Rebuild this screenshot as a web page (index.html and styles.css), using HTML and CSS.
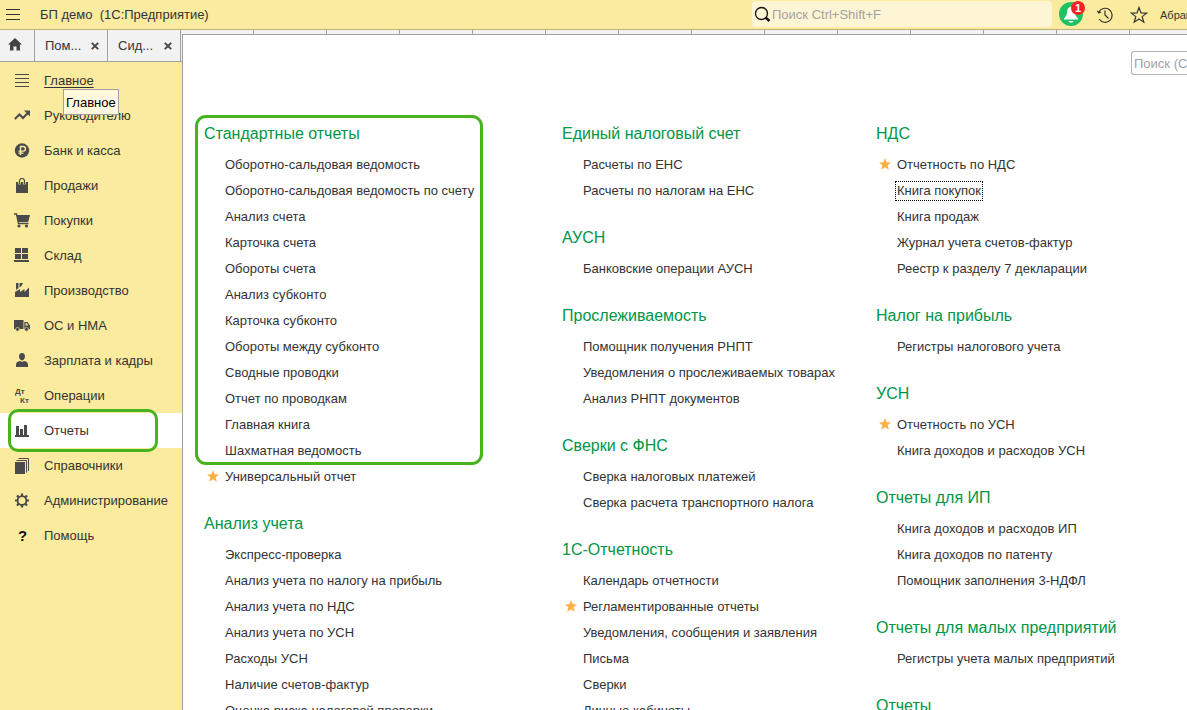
FILE: index.html
```html
<!DOCTYPE html>
<html lang="ru">
<head>
<meta charset="utf-8">
<title>БП демо (1С:Предприятие)</title>
<link rel="stylesheet" href="styles.css">
</head>
<body>
<header class="topbar">
  <button class="icon-btn menu-btn" aria-label="Меню"><svg width="14" height="12" viewBox="0 0 14 12"><path d="M0 .5h14M0 5.500h14M0 10.500h14" stroke="#333" fill="none"/></svg></button>
  <h1 class="app-title">БП демо&nbsp; (1С:Предприятие)</h1>
  <label class="global-search">
    <svg width="17" height="17" viewBox="0 0 17 17" fill="none" stroke="#111"><circle cx="7.500" cy="7.500" r="6" stroke-width="1.300"/><path d="M11.500 11.500L15.500 15" stroke-width="2.400"/></svg>
    <input type="text" placeholder="Поиск Ctrl+Shift+F" aria-label="Поиск">
  </label>
  <div class="top-actions">
    <button class="icon-btn bell-btn" aria-label="Уведомления"><svg width="24" height="24" viewBox="0 0 24 24"><circle cx="12" cy="12" r="12" fill="#20c063"/><path d="M12 4.500c-2.700.5-3.800 2.700-4 5.500-.2 3-1 4.500-3 6.500v1h14v-1c-2-2-2.800-3.500-3-6.500-.2-2.800-1.300-5-4-5.500z" fill="#fff"/><path d="M9.500 19h5c-.5 2-4.500 2-5 0z" fill="#fff"/></svg><span class="badge">1</span></button>
    <button class="icon-btn" aria-label="История"><svg width="18" height="18" viewBox="0 0 18 18" fill="none" stroke="#333" stroke-width="1.200"><path d="M2.700 6.500A7 7 0 1 1 3.200 13"/><path d="M.5 4.500l2 3.300 3.300-1.600z" fill="#333" stroke="none"/><path d="M9 4.500V9l3.500 3.500"/></svg></button>
    <button class="icon-btn" aria-label="Избранное"><svg width="18" height="18" viewBox="0 0 18 18"><path d="M9 1.500l2 5.400 5.700.2-4.500 3.500 1.600 5.600L9 13l-4.800 3.200 1.600-5.600L1.300 7.100 7 6.900z" fill="none" stroke="#333" stroke-width="1.200"/></svg></button>
    <span class="user">Абрамов</span>
  </div>
</header>
<div class="workspace">
  <div class="left">
    <div class="tabs">
      <button class="tab home" aria-label="Начальная страница"><svg width="14" height="13" viewBox="0 0 14 13"><path d="M7 0l7 6.500h-2V12.500H8.500V8.500h-3v4H2v-6H0z" fill="#444"/></svg></button>
      <div class="tab"><button class="tab-name">Пом...</button><button class="close" aria-label="Закрыть"><svg width="8" height="8" viewBox="0 0 8 8"><path d="M.8.8l6.400 6.400M7.200.8L.8 7.200" stroke="#444" stroke-width="1.900"/></svg></button></div>
      <div class="tab"><button class="tab-name">Сид...</button><button class="close" aria-label="Закрыть"><svg width="8" height="8" viewBox="0 0 8 8"><path d="M.8.8l6.400 6.400M7.200.8L.8 7.200" stroke="#444" stroke-width="1.900"/></svg></button></div>
    </div>
    <nav class="sections">
      <a class="nav hovered" href="#"><svg viewBox="0 0 16 16"><path d="M1 1.500h14M1 5.500h14M1 9.500h14M1 13.500h14" stroke="#4a4a4a"/></svg><span>Главное</span><span class="tooltip" role="tooltip">Главное</span></a>
      <a class="nav" href="#"><svg viewBox="0 0 16 16"><path d="M.8 11l4.700-4.500 3.500 3.500 4.500-4.800" fill="none" stroke="#4a4a4a" stroke-width="2"/><path d="M10 2.500h6v6z" fill="#4a4a4a"/></svg><span>Руководителю</span></a>
      <a class="nav" href="#"><svg viewBox="0 0 16 16"><circle cx="8" cy="7.500" r="7.200" fill="#4a4a4a"/><path d="M6.500 12V3.500h2.700a2.300 2.300 0 0 1 0 4.600H4.500M4.500 10.100h5" fill="none" stroke="#faeb9e" stroke-width="1.400"/></svg><span>Банк и касса</span></a>
      <a class="nav" href="#"><svg viewBox="0 0 16 16"><path d="M2 4h12v11H2z" fill="#4a4a4a"/><path d="M5.500 6.500V3a2.500 2.500 0 0 1 5 0v3.500" fill="none" stroke="#faeb9e" stroke-width="2.600"/><path d="M5.500 6.500V3a2.500 2.500 0 0 1 5 0v3.500" fill="none" stroke="#4a4a4a" stroke-width="1.200"/></svg><span>Продажи</span></a>
      <a class="nav" href="#"><svg viewBox="0 0 16 16"><path d="M0 1h2.500l2 9.500h10" fill="none" stroke="#4a4a4a" stroke-width="1.300"/><path d="M2.500 2H16l-1.800 7H4z" fill="#4a4a4a"/><circle cx="5" cy="13" r="1.600" fill="#4a4a4a"/><circle cx="12.500" cy="13" r="1.600" fill="#4a4a4a"/></svg><span>Покупки</span></a>
      <a class="nav" href="#"><svg viewBox="0 0 16 16"><path d="M1 0h6v5H1zM8 0h6v5H8zM1 6h6v5H1zM8 6h6v5H8zM0 12h15v2H0z" fill="#4a4a4a"/></svg><span>Склад</span></a>
      <a class="nav" href="#"><svg viewBox="0 0 16 16"><path d="M1 14V9l5-3v3l4.500-3v3L15 4.500V14zM2 0h2.500v5L2 7zM5.500 0H9L7.500 3l-2 1.500z" fill="#4a4a4a"/></svg><span>Производство</span></a>
      <a class="nav" href="#"><svg viewBox="0 0 16 16"><path d="M0 2h9.500v9H0zM10.300 4h3.200L16 7.500V11h-5.700z" fill="#4a4a4a"/><path d="M11.500 5.200h1.500l1.200 2.200h-2.700z" fill="#faeb9e"/><circle cx="3.500" cy="11.300" r="1.900" fill="#4a4a4a" stroke="#faeb9e" stroke-width=".6"/><circle cx="12.500" cy="11.300" r="1.900" fill="#4a4a4a" stroke="#faeb9e" stroke-width=".6"/></svg><span>ОС и НМА</span></a>
      <a class="nav" href="#"><svg viewBox="0 0 16 16"><path d="M8 0c2 0 3 1.300 3 3.300S9.800 7.500 8 7.500 5 5.300 5 3.300 6 0 8 0zM2 14v-2.500c0-2 1.300-3 4-3.500l2 1 2-1c2.700.5 4 1.500 4 3.500V14z" fill="#4a4a4a"/></svg><span>Зарплата и кадры</span></a>
      <a class="nav" href="#"><svg viewBox="0 0 16 16"><text class="glyph-small" x="1" y="6">Дт</text><text class="glyph-small" x="6" y="15">Кт</text></svg><span>Операции</span></a>
      <a class="nav current" href="#" aria-current="page"><svg viewBox="0 0 16 16"><path d="M2 3h3v10H2zM6 6h3v7H6zM10 2h3v11h-3zM1 12h14v2H1z" fill="#4a4a4a"/></svg><span>Отчеты</span></a>
      <a class="nav" href="#"><svg viewBox="0 0 16 16"><path d="M1 4h10v12H1z" fill="#4a4a4a"/><path d="M2.500 2.500h10V14.500M4.500 .5h10V13" fill="none" stroke="#4a4a4a"/></svg><span>Справочники</span></a>
      <a class="nav" href="#"><svg viewBox="0 0 16 16"><circle cx="8" cy="7.500" r="4.400" fill="none" stroke="#4a4a4a" stroke-width="1.800"/><path d="M8 .5V3M8 12v2.500M1 7.500h2.500M12.500 7.500H15M3 2.500l1.900 1.900M11.100 10.600L13 12.500M13 2.500l-1.900 1.900M4.900 10.600L3 12.500" stroke="#4a4a4a" stroke-width="2.200"/></svg><span>Администрирование</span></a>
      <a class="nav" href="#"><svg viewBox="0 0 16 16"><text class="glyph-help" x="4" y="13">?</text></svg><span>Помощь</span></a>
    </nav>
  </div>
  <div class="right">
    <div class="tab-edge"></div>
    <main class="content">
      <div class="toolbar"><input class="panel-search" type="text" placeholder="Поиск (Ctrl+F)" aria-label="Поиск по разделу"></div>
      <div class="columns">
        <div class="column">
          <section class="group marked">
            <h2>Стандартные отчеты</h2>
            <ul>
              <li><a href="#">Оборотно-сальдовая ведомость</a></li>
              <li><a href="#">Оборотно-сальдовая ведомость по счету</a></li>
              <li><a href="#">Анализ счета</a></li>
              <li><a href="#">Карточка счета</a></li>
              <li><a href="#">Обороты счета</a></li>
              <li><a href="#">Анализ субконто</a></li>
              <li><a href="#">Карточка субконто</a></li>
              <li><a href="#">Обороты между субконто</a></li>
              <li><a href="#">Сводные проводки</a></li>
              <li><a href="#">Отчет по проводкам</a></li>
              <li><a href="#">Главная книга</a></li>
              <li><a href="#">Шахматная ведомость</a></li>
              <li class="fav"><a href="#">Универсальный отчет</a></li>
            </ul>
          </section>
          <section class="group">
            <h2>Анализ учета</h2>
            <ul>
              <li><a href="#">Экспресс-проверка</a></li>
              <li><a href="#">Анализ учета по налогу на прибыль</a></li>
              <li><a href="#">Анализ учета по НДС</a></li>
              <li><a href="#">Анализ учета по УСН</a></li>
              <li><a href="#">Расходы УСН</a></li>
              <li><a href="#">Наличие счетов-фактур</a></li>
              <li><a href="#">Оценка риска налоговой проверки</a></li>
            </ul>
          </section>
        </div>
        <div class="column">
          <section class="group">
            <h2>Единый налоговый счет</h2>
            <ul>
              <li><a href="#">Расчеты по ЕНС</a></li>
              <li><a href="#">Расчеты по налогам на ЕНС</a></li>
            </ul>
          </section>
          <section class="group">
            <h2>АУСН</h2>
            <ul><li><a href="#">Банковские операции АУСН</a></li></ul>
          </section>
          <section class="group">
            <h2>Прослеживаемость</h2>
            <ul>
              <li><a href="#">Помощник получения РНПТ</a></li>
              <li><a href="#">Уведомления о прослеживаемых товарах</a></li>
              <li><a href="#">Анализ РНПТ документов</a></li>
            </ul>
          </section>
          <section class="group">
            <h2>Сверки с ФНС</h2>
            <ul>
              <li><a href="#">Сверка налоговых платежей</a></li>
              <li><a href="#">Сверка расчета транспортного налога</a></li>
            </ul>
          </section>
          <section class="group">
            <h2>1С-Отчетность</h2>
            <ul>
              <li><a href="#">Календарь отчетности</a></li>
              <li class="fav"><a href="#">Регламентированные отчеты</a></li>
              <li><a href="#">Уведомления, сообщения и заявления</a></li>
              <li><a href="#">Письма</a></li>
              <li><a href="#">Сверки</a></li>
              <li><a href="#">Личные кабинеты</a></li>
            </ul>
          </section>
        </div>
        <div class="column">
          <section class="group">
            <h2>НДС</h2>
            <ul>
              <li class="fav"><a href="#">Отчетность по НДС</a></li>
              <li><a class="focused" href="#">Книга покупок</a></li>
              <li><a href="#">Книга продаж</a></li>
              <li><a href="#">Журнал учета счетов-фактур</a></li>
              <li><a href="#">Реестр к разделу 7 декларации</a></li>
            </ul>
          </section>
          <section class="group">
            <h2>Налог на прибыль</h2>
            <ul><li><a href="#">Регистры налогового учета</a></li></ul>
          </section>
          <section class="group">
            <h2>УСН</h2>
            <ul>
              <li class="fav"><a href="#">Отчетность по УСН</a></li>
              <li><a href="#">Книга доходов и расходов УСН</a></li>
            </ul>
          </section>
          <section class="group">
            <h2>Отчеты для ИП</h2>
            <ul>
              <li><a href="#">Книга доходов и расходов ИП</a></li>
              <li><a href="#">Книга доходов по патенту</a></li>
              <li><a href="#">Помощник заполнения 3-НДФЛ</a></li>
            </ul>
          </section>
          <section class="group">
            <h2>Отчеты для малых предприятий</h2>
            <ul><li><a href="#">Регистры учета малых предприятий</a></li></ul>
          </section>
          <section class="group">
            <h2>Отчеты</h2>
          </section>
        </div>
      </div>
    </main>
  </div>
</div>
</body>
</html>
```
FILE: styles.css
```css
*, *::before, *::after { box-sizing: border-box; }

body {
  margin: 0;
  height: 100vh;
  overflow: hidden;
  display: flex;
  flex-direction: column;
  background: #fff;
  color: #333;
  font: 13px/16px "Liberation Sans", Arial, sans-serif;
}

button {
  padding: 0;
  border: 0;
  background: none;
  color: inherit;
  font: inherit;
}

input { font: inherit; min-width: 0; }
input::placeholder { color: #a3a3a3; opacity: 1; }
a { color: inherit; text-decoration: none; }
svg { display: block; flex: none; }
h1, h2, ul { margin: 0; padding: 0; font-weight: normal; }
ul { list-style: none; }

/* Top bar */
.topbar {
  flex: none;
  display: flex;
  align-items: center;
  height: 30px;
  padding-left: 6px;
  background: #faeb9e;
  border-bottom: 1px solid #bdb274;
}
.icon-btn { flex: none; position: relative; }
.app-title {
  flex: 1;
  margin-left: 20px;
  font-size: 13px;
  white-space: nowrap;
}
.global-search {
  display: flex;
  align-items: center;
  gap: 1px;
  width: 300px;
  height: 26px;
  margin-bottom: 1px;
  padding-left: 2px;
  border-radius: 3px;
  background: #fdf5d3;
}
.global-search input {
  flex: 1;
  border: 0;
  padding: 2px 0 0;
  background: none;
  outline: 0;
}
.top-actions {
  display: flex;
  align-items: center;
  width: 135px;
  padding-left: 7px;
  overflow: hidden;
  height: 29px;
}
.bell-btn { margin: 0 13px 2px 0; }
.top-actions .icon-btn + .icon-btn + .icon-btn { margin: 0 12px 0 16px; }
.badge {
  position: absolute;
  top: -1px;
  right: -2px;
  width: 14px;
  height: 14px;
  border-radius: 7px;
  background: #fb1f24;
  color: #fff;
  font: bold 11px/14px "Liberation Sans", Arial, sans-serif;
  text-align: center;
}
.user { font-size: 11px; white-space: nowrap; }

/* Layout under the top bar */
.workspace {
  flex: 1;
  min-height: 0;
  display: grid;
  grid-template-columns: 182px 1fr;
}
.left {
  display: flex;
  flex-direction: column;
  background: #faeb9e;
}
.tabs {
  display: flex;
  height: 32px;
  background: #f2f2f2;
  border-bottom: 1px solid #a0a0a0;
}
.tab {
  display: flex;
  align-items: center;
  justify-content: space-between;
  width: 73px;
  padding: 0 8px 0 10px;
  border-right: 1px solid #a0a0a0;
}
.tab.home { width: 35px; justify-content: center; padding: 0 4px 2px 0; }

.sections { padding-top: 1px; }
.nav {
  position: relative;
  display: flex;
  align-items: center;
  gap: 14px;
  height: 35px;
  padding-left: 14px;
}
.nav svg { width: 16px; height: 16px; }
.nav.hovered { z-index: 1; }
.nav.hovered > span:first-of-type { text-decoration: underline; text-underline-offset: 2px; }
.nav.current { background: #fff; }
.nav.current::after {
  content: "";
  position: absolute;
  left: 8px;
  top: -4px;
  width: 150px;
  height: 43px;
  border: 3px solid #47b31f;
  border-radius: 10px;
}
.tooltip {
  position: absolute;
  left: 63px;
  top: 26px;
  padding: 5px 2px 3px;
  border: 1px solid #a0a0a0;
  background: #fff8dc;
  color: #000;
}
.glyph-small { font: bold 8px "Liberation Sans", Arial, sans-serif; fill: #4a4a4a; }
.glyph-help { font: bold 15px "Liberation Sans", Arial, sans-serif; fill: #111; }

/* Content */
.right { display: flex; flex-direction: column; min-width: 0; min-height: 0; }
.tab-edge {
  height: 4px;
  background: repeating-linear-gradient(to right, #f2f2f2 0 71px, #a0a0a0 71px 72px, #f2f2f2 72px 73px);
}
.content {
  flex: 1;
  min-height: 0;
  overflow: hidden;
  border-top: 1px solid #a0a0a0;
  border-left: 1px solid #a0a0a0;
}
.toolbar {
  display: flex;
  justify-content: flex-end;
  padding-top: 16px;
}
.panel-search {
  width: 56px;
  height: 24px;
  padding: 0 0 0 2px;
  border: 1px solid #b5b5b5;
  border-right: 0;
  border-radius: 3px 0 0 3px;
}
.columns {
  display: grid;
  grid-template-columns: 358px 314px 1fr;
  padding: 49px 0 0 21px;
}
.column {
  display: flex;
  flex-direction: column;
  gap: 24px;
}
.group { position: relative; }
.group h2 {
  margin-bottom: 8px;
  color: #009646;
  font-size: 16px;
  line-height: 20px;
  white-space: nowrap;
}
.group li {
  display: flex;
  align-items: center;
  height: 26px;
  padding-left: 21px;
  white-space: nowrap;
}
.group li.fav { padding-left: 3px; gap: 6px; }
.fav::before {
  content: "";
  width: 12px;
  height: 12px;
  margin-bottom: 2px;
  background: #fbb040;
  clip-path: polygon(50% 0, 64% 35%, 100% 38%, 72% 61%, 82% 98%, 50% 77%, 18% 98%, 28% 61%, 0 38%, 36% 35%);
}
.focused { outline: 1px dotted #000; outline-offset: 1px; }
.marked::after {
  content: "";
  position: absolute;
  top: -9px;
  bottom: 25px;
  left: -9px;
  width: 288px;
  border: 3px solid #47b31f;
  border-radius: 11px;
  pointer-events: none;
}
```
